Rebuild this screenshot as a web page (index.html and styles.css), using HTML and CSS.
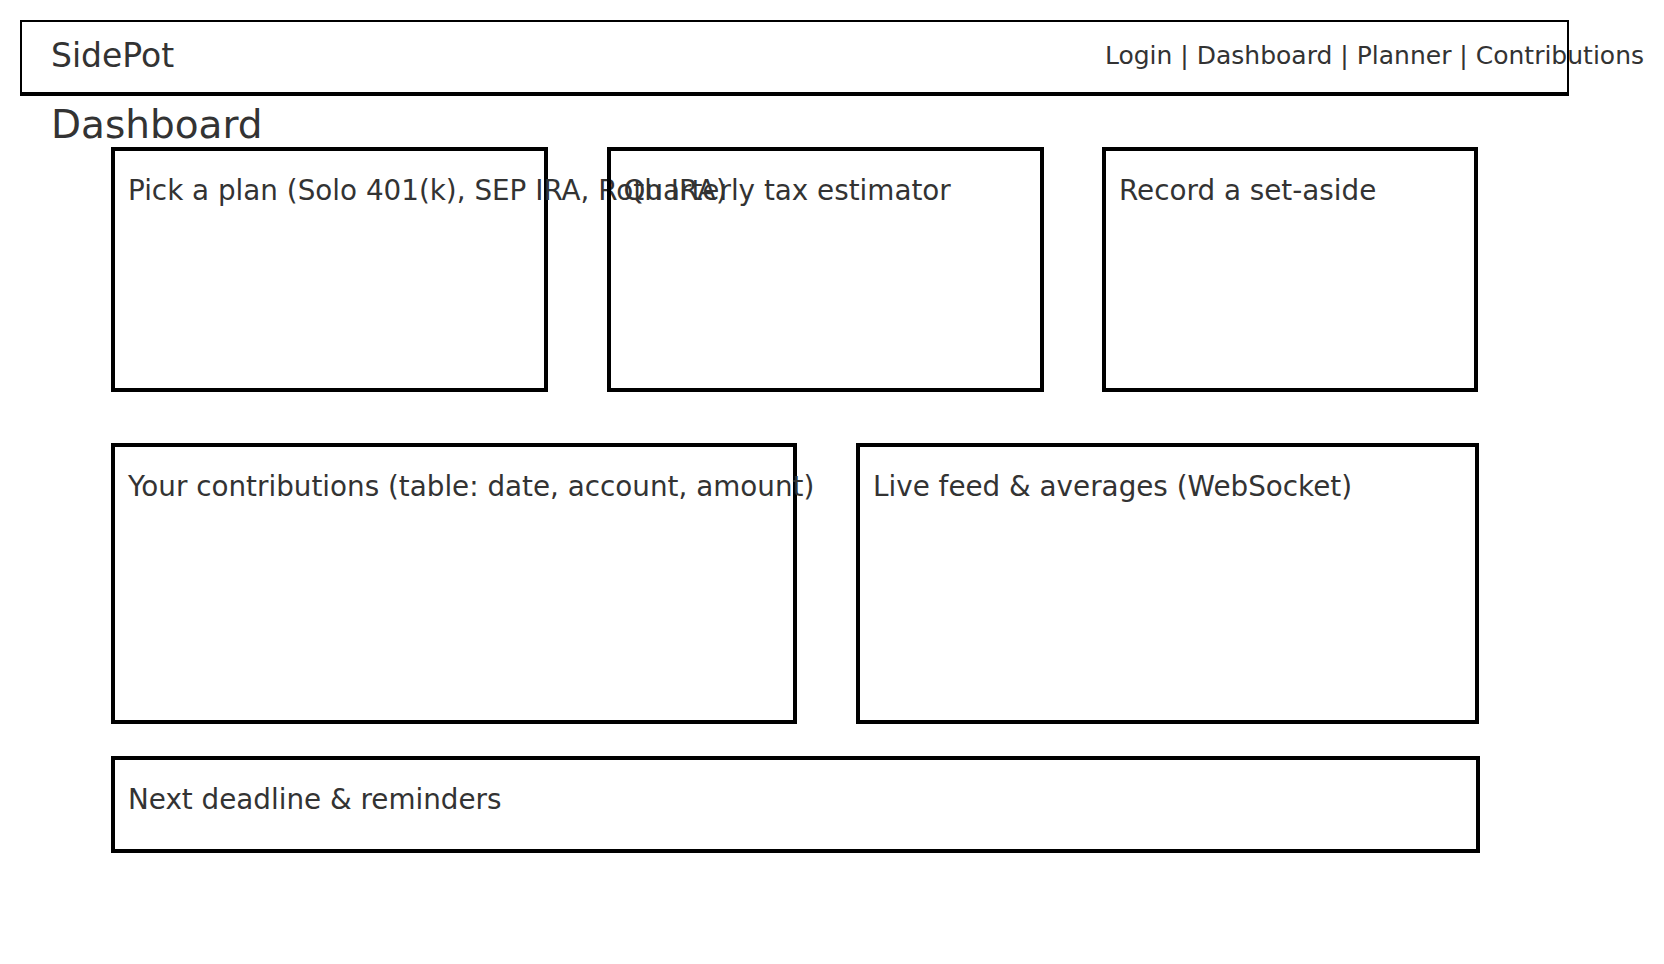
FILE: index.html
```html
<!DOCTYPE html>
<html lang="en">
<head>
    <meta charset="UTF-8">
    <meta name="viewport" content="width=device-width, initial-scale=1.0">
    <title>SidePot - Dashboard</title>
    <link rel="stylesheet" href="styles.css">
</head>
<body>
    <header class="topbar">
        <div class="brand">SidePot</div>
        <nav class="nav">
            <a href="#">Login</a> | <a href="#">Dashboard</a> | <a href="#">Planner</a> | <a href="#">Contributions</a>
        </nav>
    </header>

    <main class="board">
        <h1 class="page-title">Dashboard</h1>

        <section class="row row-top">
            <div class="card card-plan">
                <h2 class="card-title">Pick a plan (Solo 401(k), SEP IRA, Roth IRA)</h2>
            </div>
            <div class="card card-tax">
                <h2 class="card-title">Quarterly tax estimator</h2>
            </div>
            <div class="card card-setaside">
                <h2 class="card-title">Record a set-aside</h2>
            </div>
        </section>

        <section class="row row-middle">
            <div class="card card-contributions">
                <h2 class="card-title">Your contributions (table: date, account, amount)</h2>
            </div>
            <div class="card card-feed">
                <h2 class="card-title">Live feed &amp; averages (WebSocket)</h2>
            </div>
        </section>

        <section class="row row-bottom">
            <div class="card card-deadline">
                <h2 class="card-title">Next deadline &amp; reminders</h2>
            </div>
        </section>
    </main>
</body>
</html>
```

FILE: styles.css
```css
* {
    margin: 0;
    padding: 0;
    box-sizing: border-box;
}

body {
    font-family: 'DejaVu Sans', 'Liberation Sans', sans-serif;
    color: #333;
    background: #fff;
}

.topbar {
    display: flex;
    align-items: center;
    width: 1549px;
    margin: 20px 0 0 20px;
    padding: 14px 29px 17px;
    border: 2px solid #000;
    border-bottom-width: 4px;
}

.brand {
    font-size: 33px;
}

.nav {
    margin-left: auto;
    margin-right: -106px;
    flex-shrink: 0;
    font-size: 25px;
    white-space: nowrap;
}

.nav a {
    color: inherit;
    text-decoration: none;
}

.page-title {
    font-size: 39px;
    font-weight: normal;
    margin: 6px 0 0 31px;
}

.board {
    margin-left: 20px;
}

.row {
    display: flex;
    gap: 58.5px;
    width: 1369px;
    margin-left: 91px;
}

.row-top {
    height: 245px;
}

.row-middle {
    height: 281px;
    margin-top: 51px;
    gap: 59px;
}

.row-bottom {
    height: 97px;
    margin-top: 32px;
}

.card {
    border: 4px solid #000;
    padding: 23px 13px;
}

.card-title {
    font-size: 27.8px;
    font-weight: normal;
    white-space: nowrap;
}

.card-plan,
.card-tax {
    width: 437px;
}

.card-setaside {
    width: 376px;
}

.card-contributions {
    width: 686px;
}

.card-feed {
    width: 623px;
}

.card-deadline {
    width: 100%;
}
```
